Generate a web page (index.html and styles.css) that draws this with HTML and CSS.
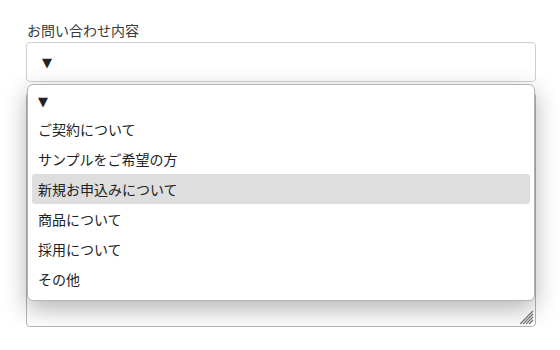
FILE: index.html
```html
<!DOCTYPE html>
<html lang="ja">

<head>
  <meta charset="UTF-8">
  <meta name="viewport" content="width=device-width, initial-scale=1.0">
  <title>お問い合わせ</title>

  <link rel="stylesheet" href="styles.css">
</head>

<body>
  <div class="form">
    <label class="label">お問い合わせ内容</label>
    <div class="field">
      <div class="select"><span class="arrow">▼</span></div>
      <!-- 開いたドロップダウン -->
      <ul class="menu">
        <li class="option head"><span class="arrow">▼</span></li>
        <li class="option">ご契約について</li>
        <li class="option">サンプルをご希望の方</li>
        <li class="option active">新規お申込みについて</li>
        <li class="option">商品について</li>
        <li class="option">採用について</li>
        <li class="option">その他</li>
      </ul>
    </div>
    <div class="textarea">
      <svg class="grip" width="16" height="16" viewBox="0 0 16 16">
        <path d="M2 15 L15 2 M5 15 L15 5 M8 15 L15 8 M11 15 L15 11" stroke="#777" stroke-width="1.2" />
      </svg>
    </div>
  </div>
</body>

</html>
```

FILE: styles.css
```css
* {
  margin: 0;
  padding: 0;
  box-sizing: border-box;
}

body {
  background: #fff;
  font-family: "Noto Sans CJK JP", "Noto Sans", sans-serif;
  color: #333;
}

.form {
  display: flex;
  flex-direction: column;
  width: 510px;
  margin: 0 0 0 26px;
  padding-top: 20px;
}

.label {
  font-size: 14px;
  line-height: 20px;
  height: 22px;
  padding-left: 1px;
  color: #3a3a3a;
}

.field {
  position: relative;
}

/* セレクトボックス */
.select {
  display: flex;
  align-items: center;
  height: 40px;
  padding-left: 15px;
  border: 1px solid #cfcfcf;
  border-radius: 4px;
  background: #fff;
}

.arrow {
  font-family: "DejaVu Sans", sans-serif;
  font-size: 13px;
  color: #222;
}

/* ドロップダウン */
.menu {
  position: absolute;
  top: 42px;
  left: 1px;
  width: 508px;
  height: 217px;
  padding: 1px 4px 6px;
  list-style: none;
  background: #fff;
  border: 1px solid #b4b4b4;
  border-radius: 6px;
  box-shadow: 0 8px 24px rgba(0, 0, 0, 0.3);
  z-index: 2;
}

.option {
  height: 30px;
  line-height: 30px;
  padding: 0 6px;
  font-size: 14px;
  color: #222;
  border-radius: 3px;
}

.option.head {
  height: 28px;
  line-height: 28px;
}

.option.active {
  background: #dedede;
}

/* テキストエリア */
.textarea {
  position: relative;
  height: 235px;
  margin-top: 10px;
  border: 1px solid #b5b5b5;
  border-radius: 4px;
  background: #fff;
}

.grip {
  position: absolute;
  right: 1px;
  bottom: 1px;
}
```
